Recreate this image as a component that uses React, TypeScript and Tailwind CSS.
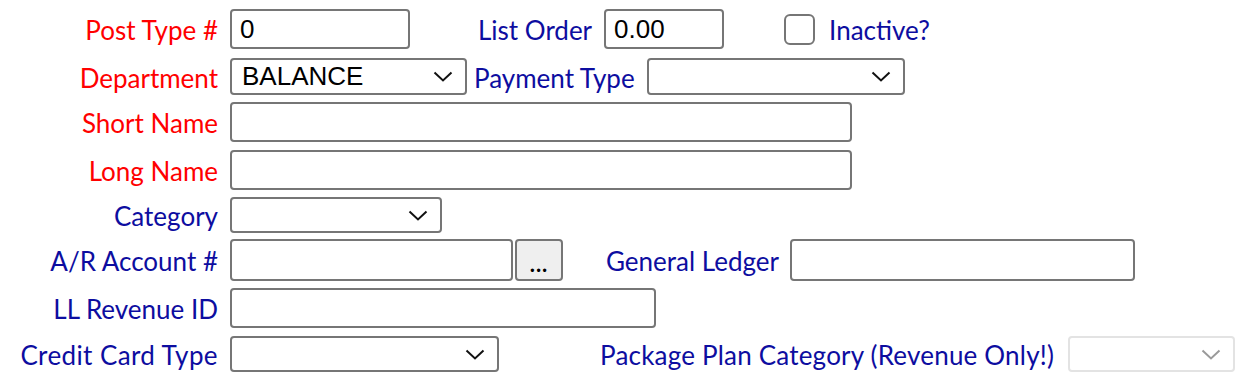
import React from 'react';

const label = "text-[26px] leading-none whitespace-nowrap";
const red = `${label} text-[#ff0000]`;
const blue = `${label} text-[#0d0da0]`;
const box =
  "h-full rounded-[4px] border-2 border-[#767676] bg-white px-[8px] text-[26px] text-black [font-family:'Liberation_Sans',Arial,sans-serif]";

function Chevron({ muted }: { muted?: boolean }) {
  return (
    <svg width="20" height="11" viewBox="0 0 20 11" className="shrink-0">
      <path
        d="M1.5 1.5 L10 9.5 L18.5 1.5"
        fill="none"
        stroke={muted ? '#9a9a9a' : '#111'}
        strokeWidth="2"
      />
    </svg>
  );
}

function Select({ w, value, disabled }: { w: string; value?: string; disabled?: boolean }) {
  return (
    <div
      className={`${w} flex h-full items-center justify-between rounded-[4px] border-2 pl-[10px] pr-[12px] text-[26px] text-black [font-family:'Liberation_Sans',Arial,sans-serif] ${
        disabled ? 'border-[#e3e3e3] bg-white' : 'border-[#767676] bg-white'
      }`}
    >
      <span>{value}</span>
      <Chevron muted={disabled} />
    </div>
  );
}

function Label({ children, req, wide }: { children: React.ReactNode; req?: boolean; wide?: boolean }) {
  return (
    <div className="flex w-[218px] shrink-0 justify-end pt-[2px]">
      <span className={`${req ? red : blue} ${wide ? 'tracking-[0.4px]' : ''}`}>{children}</span>
    </div>
  );
}

export default function App() {
  return (
    <div className="h-[374px] w-[1242px] overflow-hidden bg-white pt-[9px] [font-family:Lato,'Noto_Sans',sans-serif]">
      {/* row 1 */}
      <div className="flex h-[40px] items-center">
        <Label req>Post Type #</Label>
        <input readOnly value="0" className={`${box} ml-[12px] w-[180px]`} />
        <span className={`${blue} ml-[68px] pt-[2px]`}>List Order</span>
        <input readOnly value="0.00" className={`${box} ml-[12px] w-[120px]`} />
        <div className="ml-[60px] h-[31px] w-[31px] rounded-[6px] border-2 border-[#767676] bg-white" />
        <span className={`${blue} ml-[14px] pt-[2px]`}>Inactive?</span>
      </div>

      {/* row 2 */}
      <div className="mt-[9px] flex h-[37px] items-center">
        <Label req>Department</Label>
        <div className="ml-[12px] h-full">
          <Select w="w-[237px]" value="BALANCE" />
        </div>
        <span className={`${blue} ml-[7px] pt-[2px]`}>Payment Type</span>
        <div className="ml-[12px] h-full">
          <Select w="w-[258px]" />
        </div>
      </div>

      {/* row 3 */}
      <div className="mt-[7px] flex h-[40px] items-center">
        <Label req>Short Name</Label>
        <input readOnly className={`${box} ml-[12px] w-[622px]`} />
      </div>

      {/* row 4 */}
      <div className="mt-[8px] flex h-[40px] items-center">
        <Label req>Long Name</Label>
        <input readOnly className={`${box} ml-[12px] w-[622px]`} />
      </div>

      {/* row 5 */}
      <div className="mt-[7px] flex h-[36px] items-center">
        <Label>Category</Label>
        <div className="ml-[12px] h-full">
          <Select w="w-[212px]" />
        </div>
      </div>

      {/* row 6 */}
      <div className="mt-[6px] flex h-[42px] items-center">
        <Label>A/R Account #</Label>
        <input readOnly className={`${box} ml-[12px] w-[283px]`} />
        <button className="ml-[2px] flex h-full w-[48px] items-center justify-center rounded-[4px] border-2 border-[#767676] bg-[#efefef] pt-[6px] text-[22px] font-bold tracking-[1px] text-black [font-family:Lato,sans-serif]">
          ...
        </button>
        <span className={`${blue} ml-[43px] pt-[2px]`}>General Ledger</span>
        <input readOnly className={`${box} ml-[11px] w-[345px]`} />
      </div>

      {/* row 7 */}
      <div className="mt-[7px] flex h-[40px] items-center">
        <Label>LL Revenue ID</Label>
        <input readOnly className={`${box} ml-[12px] w-[426px]`} />
      </div>

      {/* row 8 */}
      <div className="mt-[8px] flex h-[36px] items-center">
        <Label wide>Credit Card Type</Label>
        <div className="ml-[12px] h-full">
          <Select w="w-[269px]" />
        </div>
        <span className={`${blue} ml-[101px] pt-[2px] tracking-[0.2px]`}>Package Plan Category (Revenue Only!)</span>
        <div className="ml-[14px] h-full">
          <Select w="w-[167px]" disabled />
        </div>
      </div>
    </div>
  );
}
